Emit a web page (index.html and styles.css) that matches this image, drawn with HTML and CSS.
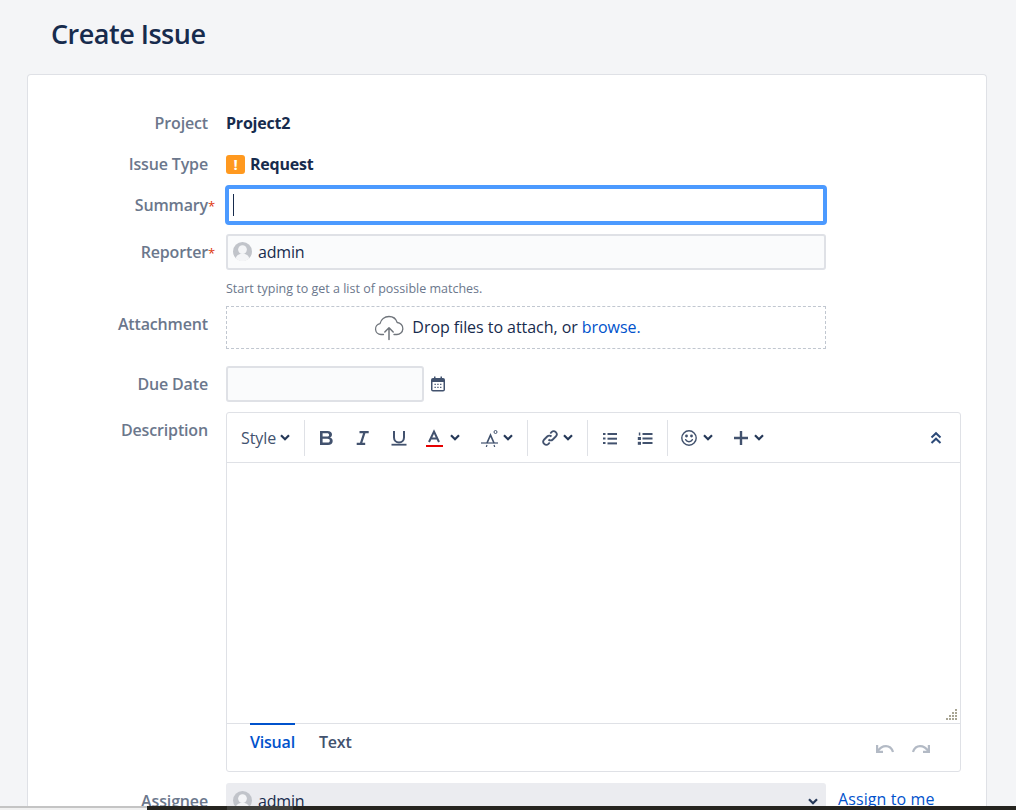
FILE: index.html
```html
<!DOCTYPE html>
<html lang="en">
  <head>
    <meta charset="UTF-8" />
    <title>Create Issue</title>
    <link rel="stylesheet" href="styles.css">
  </head>
  <body>
    <h1 class="page-title">Create Issue</h1>
    <div class="card">
      <div class="row row-project">
        <div class="label">Project</div>
        <div class="value">Project2</div>
      </div>
      <div class="row row-type">
        <div class="label">Issue Type</div>
        <div class="value type-value"><span class="type-icon">!</span>Request</div>
      </div>
      <div class="row row-summary">
        <div class="label">Summary<span class="req">*</span></div>
        <div class="input summary-input"><span class="caret"></span></div>
      </div>
      <div class="row row-reporter">
        <div class="label">Reporter<span class="req">*</span></div>
        <div class="input user-input">
          <svg class="avatar" viewBox="0 0 20 20"><circle cx="10" cy="10" r="10" fill="#c1c4ca"/><circle cx="10" cy="8" r="4.6" fill="#f4f5f7"/><path d="M2.8 17c1.2-3.4 4-4.6 7.2-4.6s6 1.2 7.2 4.6c-1.8 1.9-4.4 3-7.2 3s-5.4-1.1-7.2-3z" fill="#f4f5f7"/></svg>
          <span>admin</span>
        </div>
      </div>
      <div class="hint">Start typing to get a list of possible matches.</div>
      <div class="row row-attach">
        <div class="label">Attachment</div>
        <div class="dropzone">
          <svg class="cloud" width="30" height="26" viewBox="0 0 30 26" fill="none" stroke="#6f747b" stroke-width="1.3" stroke-linecap="round" stroke-linejoin="round"><path d="M9.500 19.500H7a5.500 5.500 0 0 1-1-10.900C7 4.500 10.500 1.500 15 1.500c4 0 7 2.300 8.200 6a5.800 5.800 0 0 1-.7 12h-2.500"/><path d="M15 24.500V13M10.800 17l4.200-4.200 4.200 4.200" stroke-width="1.5"/></svg>
          <span>Drop files to attach, or <a class="browse">browse.</a></span>
        </div>
      </div>
      <div class="row row-date">
        <div class="label">Due Date</div>
        <div class="input date-input"></div>
        <svg class="cal" width="16" height="16" viewBox="0 0 16 16"><path d="M3 2h10a2 2 0 0 1 2 2v9.500a2 2 0 0 1-2 2H3a2 2 0 0 1-2-2V4a2 2 0 0 1 2-2z" fill="#42526e"/><rect x="4" y=".5" width="1.5" height="3" fill="#42526e"/><rect x="10.500" y=".5" width="1.5" height="3" fill="#42526e"/><rect x="2.500" y="6" width="11" height="8" fill="#fff"/><path d="M4.500 7.800h1.300v1.300H4.500zM7.300 7.800h1.300v1.300H7.300zM10.100 7.800h1.300v1.300h-1.300zM4.500 10.800h1.300v1.300H4.500zM7.300 10.800h1.300v1.300H7.300zM10.100 10.800h1.300v1.300h-1.300z" fill="#42526e"/></svg>
      </div>
      <div class="row row-desc">
        <div class="label">Description</div>
        <div class="editor">
          <div class="toolbar">
            <div class="group group-style">
              <span class="style-btn">Style</span>
              <svg class="chev" viewBox="0 0 10 7"><path d="M1 1.200 5 5.200l4-4"/></svg>
            </div>
            <div class="group group-text">
              <svg class="tool" viewBox="0 0 18 18"><path fill-rule="evenodd" d="M3 2h7.500c2.800 0 4.500 1.400 4.500 3.600 0 1.500-.8 2.500-2 3 1.600.5 2.700 1.700 2.700 3.500 0 2.500-1.900 3.900-4.700 3.900H3zm2.600 2.200v3.400H10c1.300 0 2.100-.6 2.100-1.700S11.300 4.200 10 4.200zm0 5.500v3.900h4.900c1.500 0 2.300-.7 2.300-1.950s-.8-1.950-2.300-1.950z" fill="#42526e"/></svg>
              <svg class="tool" viewBox="0 0 18 18" fill="none" stroke="#42526e" stroke-width="2.200"><path d="M6.500 3.100H15.700M3.700 14.900h8.500M11.600 3.100 7.800 14.900"/></svg>
              <svg class="tool" viewBox="0 0 18 18" fill="none" stroke="#42526e" stroke-width="2"><path d="M5 2v6.500a5 5 0 0 0 10 0V2"/><path d="M2.500 15.700H17.500" stroke-width="1.8"/></svg>
              <div class="tool-pair">
                <svg class="tool" viewBox="0 0 18 18"><path d="M4 13 9 2.500 14 13M5.800 9.500h6.400" stroke="#42526e" stroke-width="2" fill="none"/><rect x="1" y="16" width="17" height="2" fill="#e60000"/></svg>
                <svg class="chev" viewBox="0 0 10 7"><path d="M1 1.200 5 5.200l4-4"/></svg>
              </div>
              <div class="tool-pair pair-bg">
                <svg class="tool" viewBox="0 0 18 18" fill="none" stroke="#42526e"><path d="M7 14 10.500 6 14 14" stroke-width="1.7"/><circle cx="15.500" cy="3" r="1.500" stroke-width="1"/><path d="M1 14h17" stroke-width="1.2"/><path d="M7 16l-.7 2M14 16l.7 2" stroke-width="1.2"/></svg>
                <svg class="chev" viewBox="0 0 10 7"><path d="M1 1.200 5 5.200l4-4"/></svg>
              </div>
            </div>
            <div class="group group-link">
              <div class="tool-pair pair-tight">
                <svg class="tool" viewBox="0 0 18 18" fill="none" stroke="#42526e" stroke-width="1.8"><path d="M7.500 10.500a3 3 0 0 0 4.300 0l3-3a3 3 0 0 0-4.300-4.300L9.300 4.500"/><path d="M10.500 7.500a3 3 0 0 0-4.300 0l-3 3a3 3 0 0 0 4.300 4.300l1.200-1.300"/></svg>
                <svg class="chev" viewBox="0 0 10 7"><path d="M1 1.200 5 5.200l4-4"/></svg>
              </div>
            </div>
            <div class="group group-lists">
              <svg class="tool" viewBox="0 0 18 18" fill="#42526e"><rect x="2" y="4" width="2.5" height="2"/><rect x="2" y="8.500" width="2.500" height="2"/><rect x="2" y="13" width="2.500" height="2"/><rect x="6.500" y="4" width="9.500" height="2"/><rect x="6.500" y="8.700" width="9.500" height="2"/><rect x="6.500" y="13.400" width="9.500" height="2"/></svg>
              <svg class="tool" viewBox="0 0 18 18" fill="#42526e"><rect x="1.800" y="3.500" width="1.500" height="3"/><rect x=".8" y="8" width="3.200" height="3"/><rect x=".8" y="12.800" width="3.200" height="3"/><rect x="5.500" y="4" width="10" height="2"/><rect x="5.500" y="8.500" width="10" height="2"/><rect x="5.500" y="13" width="10" height="2"/></svg>
            </div>
            <div class="group group-last">
              <div class="tool-pair pair-emoji">
                <svg class="tool" viewBox="0 0 18 18" fill="none" stroke="#42526e" stroke-width="1.4"><circle cx="9" cy="9" r="7.200"/><path d="M5.600 10.700c.8 1.500 2 2.100 3.400 2.100s2.600-.6 3.400-2.100" stroke-linecap="round"/><circle cx="6.500" cy="7" r=".7" fill="#42526e"/><circle cx="11.500" cy="7" r=".7" fill="#42526e"/></svg>
                <svg class="chev" viewBox="0 0 10 7"><path d="M1 1.200 5 5.200l4-4"/></svg>
              </div>
              <div class="tool-pair pair-plus">
                <svg class="tool" viewBox="0 0 18 18"><path d="M8 2v14M1 9h14" stroke="#42526e" stroke-width="2.400"/></svg>
                <svg class="chev" viewBox="0 0 10 7"><path d="M1 1.200 5 5.200l4-4"/></svg>
              </div>
            </div>
            <svg class="collapse" width="12" height="14" viewBox="0 0 12 14" fill="none" stroke="#2c4a78" stroke-width="2"><path d="M1.500 6.500 6 2.200l4.500 4.300M1.500 12 6 7.700l4.500 4.300"/></svg>
          </div>
          <div class="editor-body">
            <svg class="grip" width="12" height="12" viewBox="0 0 12 12"><path d="M10 0h2v2h-2zM7 3h2v2H7zM10 3h2v2h-2zM4 6h2v2H4zM7 6h2v2H7zM10 6h2v2h-2zM1 9h2v2H1zM4 9h2v2H4zM7 9h2v2H7zM10 9h2v2h-2z" fill="#a8a594"/></svg>
          </div>
          <div class="editor-foot">
            <div class="tabs">
              <span class="tab tab-active">Visual</span>
              <span class="tab">Text</span>
            </div>
            <div class="undo">
              <svg width="18" height="8" viewBox="0 0 18 8" fill="none" stroke="#b3bac5" stroke-width="2.200"><path d="M1.100 0v6.900H7"/><path d="M1.500 6.500C4 2.500 7 1.200 10 1.200s5.500 1.500 7 5.800"/></svg>
              <svg width="18" height="8" viewBox="0 0 18 8" fill="none" stroke="#b3bac5" stroke-width="2.200"><path d="M16.900 0v6.900H11"/><path d="M16.500 6.500C14 2.500 11 1.200 8 1.200S2.500 2.700 1 7"/></svg>
            </div>
          </div>
        </div>
      </div>
      <div class="row row-assignee">
        <div class="label">Assignee</div>
        <div class="input user-input assignee-input">
          <svg class="avatar" viewBox="0 0 20 20"><circle cx="10" cy="10" r="10" fill="#c1c4ca"/><circle cx="10" cy="8" r="4.6" fill="#f4f5f7"/><path d="M2.800 17c1.200-3.400 4-4.600 7.200-4.600s6 1.200 7.200 4.600c-1.800 1.900-4.400 3-7.200 3s-5.400-1.100-7.200-3z" fill="#f4f5f7"/></svg>
          <span>admin</span>
          <svg class="chev select-chev" viewBox="0 0 10 7"><path d="M1 1.200 5 5.200l4-4"/></svg>
        </div>
        <a class="assign-link">Assign to me</a>
      </div>
    </div>
    <div class="taskbar">
      <div class="taskbar-left"></div>
      <div class="taskbar-dark"><div class="taskbar-item"></div></div>
    </div>
  </body>
</html>
```

FILE: styles.css
```css
html,
body {
  height: 810px;
  overflow: hidden;
}

body {
  margin: 0;
  background-color: #f4f5f7;
  font-family: "Open Sans", "Noto Sans", sans-serif;
  font-size: 16px;
  color: #172b4d;
  position: relative;
}

.page-title {
  margin: 0;
  padding: 14px 0 0 51px;
  height: 60px;
  box-sizing: border-box;
  font-size: 27px;
  line-height: 40px;
  font-weight: 600;
  color: #172b4d;
  letter-spacing: -0.5px;
}

.card {
  margin: 14px 0 0 27px;
  width: 960px;
  height: 736px;
  overflow: hidden;
  box-sizing: border-box;
  background-color: #ffffff;
  border: 1px solid #dfe1e6;
  border-bottom: none;
  border-radius: 4px 4px 0 0;
  padding-top: 36px;
}

.row {
  display: flex;
  align-items: flex-start;
}

.label {
  width: 180px;
  flex: none;
  text-align: right;
  margin-right: 18px;
  font-size: 16px;
  line-height: 24px;
  font-weight: 600;
  color: #6b778c;
  letter-spacing: -0.15px;
  white-space: nowrap;
}

.value {
  font-size: 16px;
  line-height: 24px;
  font-weight: 700;
  letter-spacing: -0.2px;
}

.row-type {
  margin-top: 17px;
}

.type-value {
  display: flex;
  align-items: center;
}

.type-icon {
  width: 19px;
  height: 19px;
  border-radius: 3px;
  background-color: #ff991f;
  color: #ffffff;
  font-size: 15px;
  line-height: 19px;
  text-align: center;
  margin-right: 5px;
}

.req {
  color: #de350b;
  font-size: 13px;
  line-height: 1;
  font-weight: 400;
  margin-right: -7px;
}

.row-summary {
  margin-top: 9px;
}

.row-summary .label {
  line-height: 40px;
}

.input {
  box-sizing: border-box;
  width: 600px;
  height: 36px;
  background-color: #fafbfc;
  border: 2px solid #dfe1e6;
  border-radius: 3px;
}

.summary-input {
  width: 602px;
  height: 40px;
  margin-left: -1px;
  background-color: #ffffff;
  border: 4px solid #4c9aff;
  border-radius: 4px;
  padding: 5px 0 0 4px;
}

.caret {
  display: block;
  width: 1px;
  height: 22px;
  background-color: #172b4d;
}

.row-reporter {
  margin-top: 9px;
}

.row-reporter .label {
  line-height: 36px;
}

.user-input {
  display: flex;
  align-items: center;
  padding-left: 5px;
  font-size: 16px;
  letter-spacing: -0.2px;
}

.avatar {
  width: 19px;
  height: 19px;
  margin: -2px 6px 0 0;
  flex: none;
}

.hint {
  margin: 10px 0 0 198px;
  font-size: 12.5px;
  line-height: 18px;
  color: #6b778c;
}

.row-attach {
  margin-top: 8px;
}

.row-attach .label {
  line-height: 36px;
}

.dropzone {
  box-sizing: border-box;
  width: 600px;
  height: 43px;
  border: 1px dashed #c1c7d0;
  display: flex;
  align-items: center;
  justify-content: center;
  gap: 8px;
  padding: 0 37px 2px 0;
  font-size: 16px;
  letter-spacing: -0.05px;
}

.browse {
  color: #0052cc;
}

.cloud {
  margin-top: 3px;
}

.row-date {
  margin-top: 17px;
  align-items: center;
}

.date-input {
  width: 198px;
}

.row-date .label {
  line-height: 36px;
}

.cal {
  margin-left: 6px;
}

.row-desc {
  margin-top: 10px;
}

.row-desc .label {
  line-height: 36px;
}

.editor {
  box-sizing: border-box;
  width: 735px;
  height: 360px;
  border: 1px solid #dfe1e6;
  border-radius: 3px;
  display: flex;
  flex-direction: column;
}

.toolbar {
  height: 50px;
  flex: none;
  box-sizing: border-box;
  border-bottom: 1px solid #dfe1e6;
  display: flex;
  align-items: center;
  padding-right: 18px;
}

.group {
  height: 36px;
  display: flex;
  align-items: center;
  border-right: 1px solid #dfe1e6;
}

.group-style {
  padding: 0 14px;
  gap: 4px;
}

.group-text {
  padding: 0 14px 0 12px;
  gap: 18px;
}

.group-link {
  padding: 0 14px 0 13px;
}

.group-lists {
  padding: 0 12px 0 13px;
  gap: 18px;
}

.group-last {
  padding-left: 12px;
  border-right: none;
  gap: 20px;
}

.style-btn {
  font-size: 16px;
  color: #42526e;
  letter-spacing: -0.1px;
}

.tool {
  width: 18px;
  height: 18px;
  flex: none;
}

.tool-pair {
  display: flex;
  align-items: center;
  gap: 7px;
}

.pair-bg {
  margin-left: 2px;
  gap: 5px;
}

.pair-tight {
  gap: 4px;
}

.pair-emoji {
  gap: 5px;
}

.pair-plus {
  gap: 3px;
}

.chev {
  width: 10px;
  height: 7px;
  flex: none;
  fill: none;
  stroke: #253858;
  stroke-width: 2.2;
}

.collapse {
  margin-left: auto;
}

.editor-body {
  height: 260px;
  flex: none;
  box-sizing: border-box;
  display: flex;
  align-items: flex-end;
  justify-content: flex-end;
  padding: 0 3px 2px 0;
}

.editor-foot {
  flex: 1;
  border-top: 1px solid #dfe1e6;
  display: flex;
  justify-content: space-between;
  padding-left: 23px;
}

.tabs {
  display: flex;
  gap: 24px;
}

.tab {
  height: 34px;
  margin-top: -1px;
  padding-top: 5px;
  border-top: 2px solid transparent;
  font-size: 16px;
  line-height: 24px;
  font-weight: 600;
  color: #42526e;
  letter-spacing: -0.2px;
  box-sizing: border-box;
}

.tab-active {
  color: #0052cc;
  border-top-color: #0052cc;
}

.undo {
  display: flex;
  gap: 18px;
  padding: 21px 30px 0 0;
}

.row-assignee {
  margin-top: 11px;
}

.assignee-input {
  background-color: #ebecf0;
  border-color: #ebecf0;
}

.select-chev {
  margin-left: auto;
  margin-right: 6px;
}

.row-assignee .label {
  line-height: 36px;
}

.assign-link {
  margin-left: 12px;
  font-size: 16px;
  line-height: 32px;
  color: #0052cc;
  text-decoration: underline;
  letter-spacing: 0.1px;
}

.taskbar {
  position: absolute;
  left: 0;
  right: 0;
  bottom: 0;
  height: 4px;
  display: flex;
}

.taskbar-left {
  width: 147px;
  background-color: #f1f1f1;
  border-top: 2px solid #c4c4c4;
  box-sizing: border-box;
}

.taskbar-dark {
  flex: 1;
  background-color: #25241f;
  padding-left: 80px;
}

.taskbar-item {
  width: 66px;
  height: 4px;
  background-color: #3e3e3a;
}
```
